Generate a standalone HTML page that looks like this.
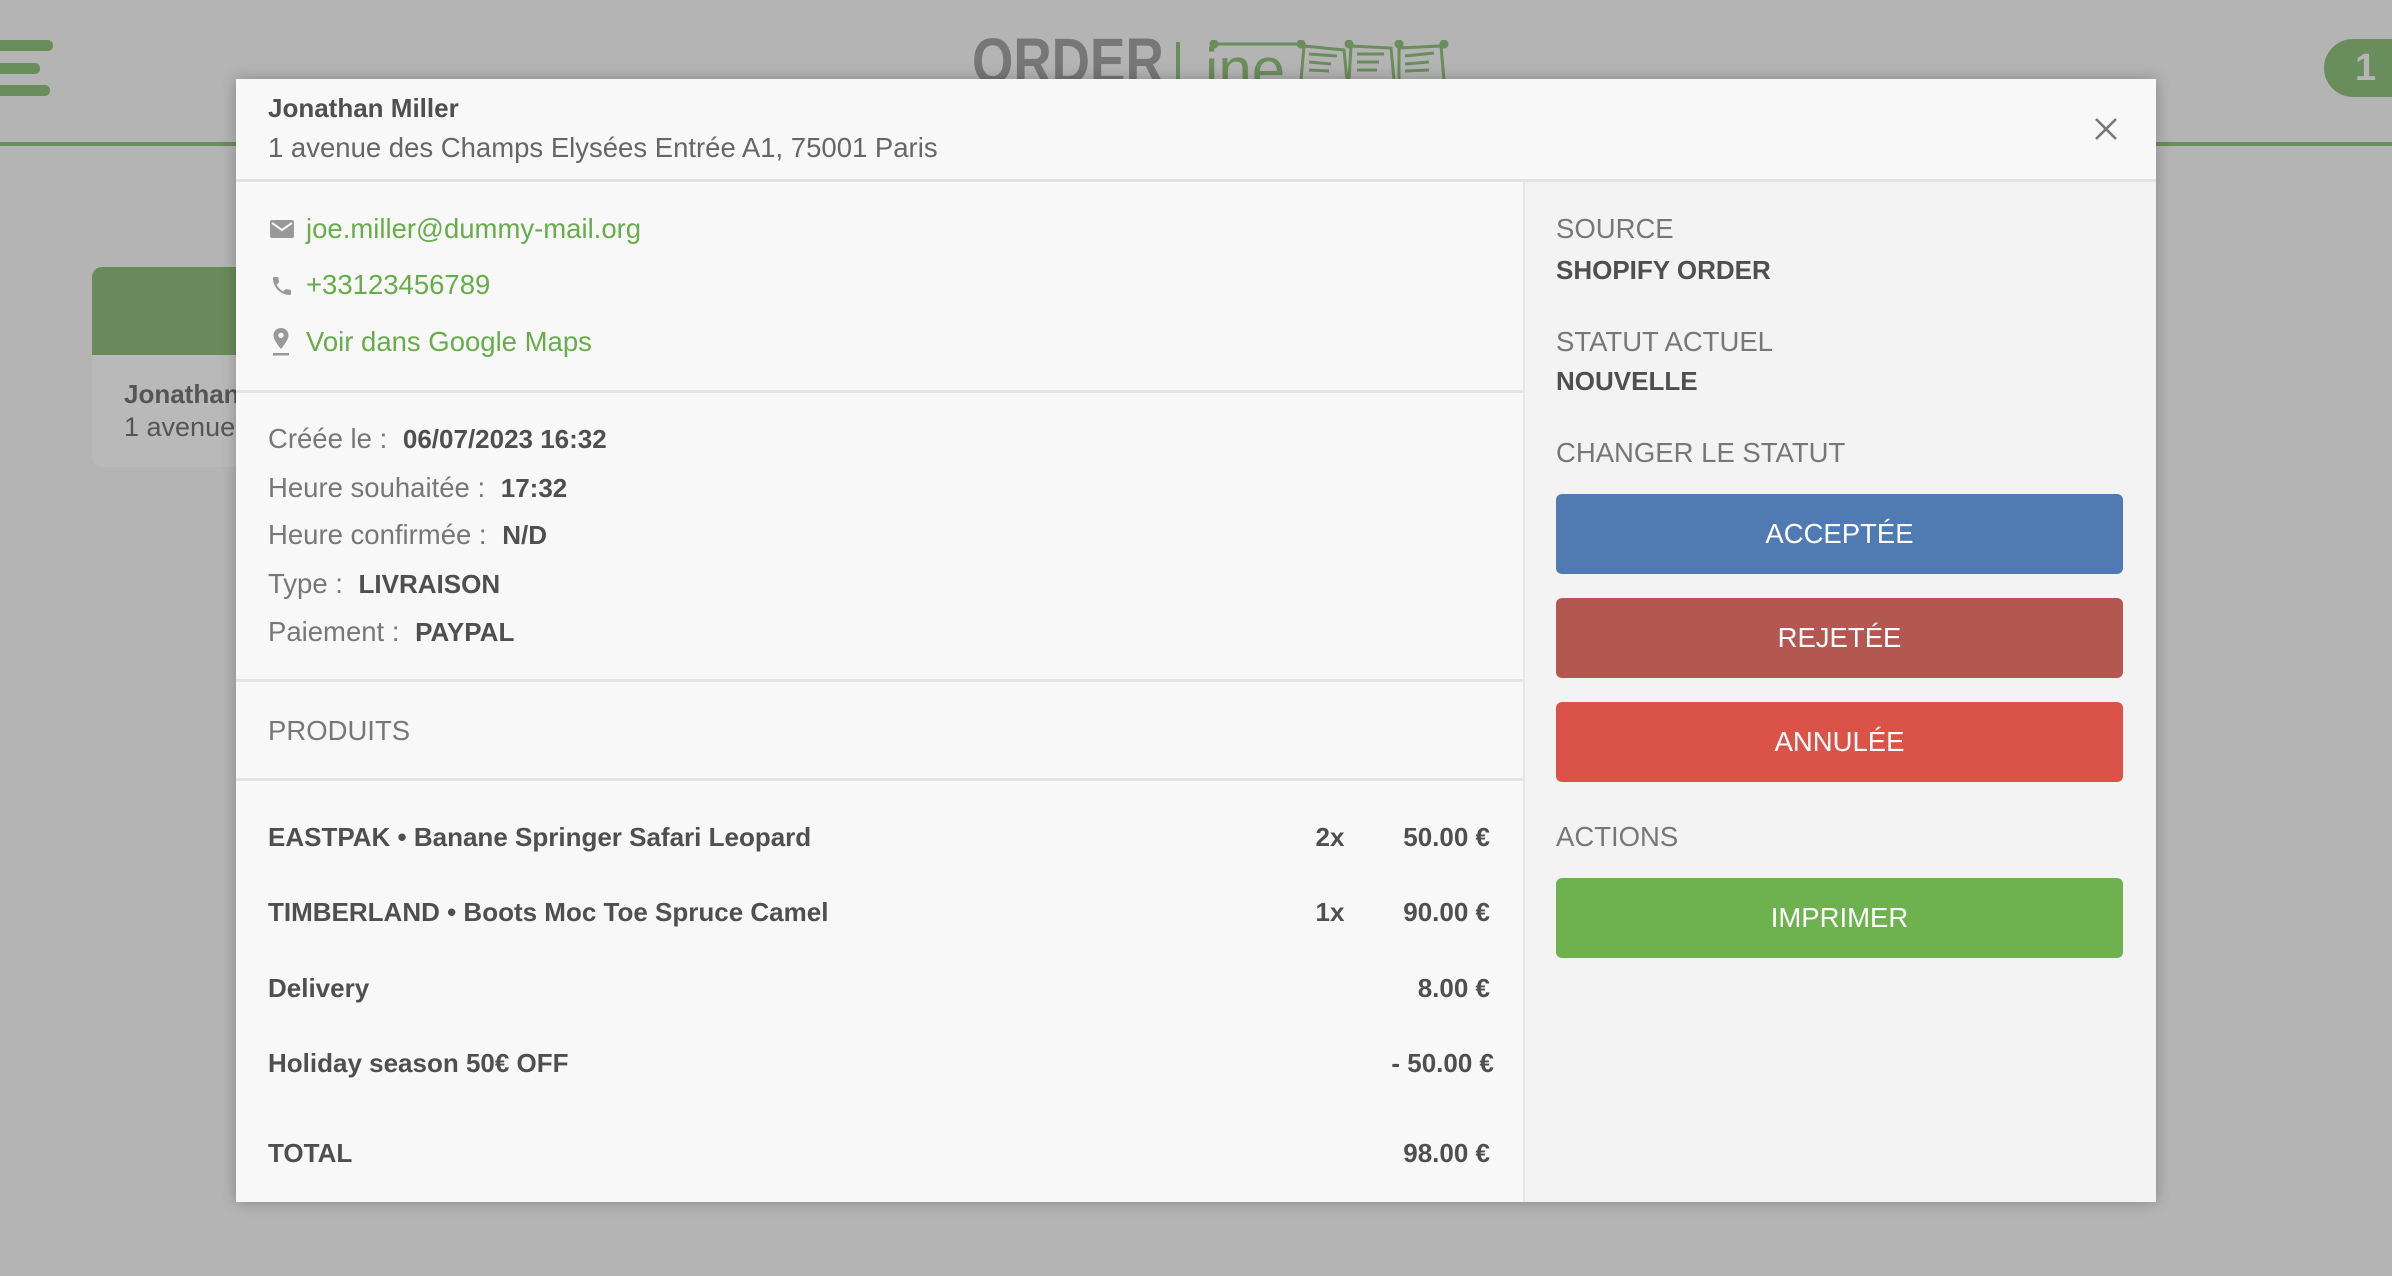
<!DOCTYPE html>
<html><head><meta charset="utf-8">
<style>
*{margin:0;padding:0;box-sizing:border-box}
html,body{width:2392px;height:1276px;overflow:hidden;background:#b4b4b4;font-family:"Liberation Sans",sans-serif;color:#555}
.a{position:absolute;white-space:nowrap}
.t{position:absolute;white-space:nowrap;height:40px;line-height:40px;font-size:27.5px}
.lbl{color:#777}
.b{font-weight:bold;color:#4f4f4f;font-size:26px}
.b2{margin-left:8px}
.g{color:#67ad4a}
.btn{position:absolute;left:1556px;width:567px;height:80px;border-radius:6px;color:#fff;font-size:27.5px;text-align:center;line-height:80px}
.sep{position:absolute;left:236px;width:1287px;height:3px;background:#e4e4e4}
</style></head><body>
<div class="a" style="left:0;top:40px;width:53px;height:11px;background:#6a8d5c;border-radius:0 5px 5px 0"></div>
<div class="a" style="left:0;top:63px;width:40px;height:11px;background:#6a8d5c;border-radius:0 5px 5px 0"></div>
<div class="a" style="left:0;top:85px;width:50px;height:11px;background:#6a8d5c;border-radius:0 5px 5px 0"></div>
<div class="a" style="left:0;top:142px;width:2392px;height:4px;background:#6a8d5c"></div>
<div class="a" style="left:2324px;top:39px;width:100px;height:58px;background:#6a8d5c;border-radius:29px"></div>
<div class="a" style="left:2355px;top:42px;font-size:38px;font-weight:bold;color:#b5b5b5;line-height:52px">1</div>
<div class="a" style="left:972px;top:29px;font-size:64px;font-weight:bold;color:#777;line-height:64px;transform:scaleX(0.83);transform-origin:left top">ORDER</div>
<div class="a" style="left:1176px;top:42px;width:4px;height:40px;background:#6a8d5c"></div>
<div class="a" style="left:1205px;top:30px;font-size:60px;color:#6a8d5c;line-height:80px">ine</div>
<svg class="a" style="left:1209px;top:40px" width="240" height="40" viewBox="0 0 240 40" fill="none" stroke="#6a8d5c" stroke-width="3">
<line x1="5" y1="4" x2="90" y2="4"/><circle cx="5" cy="4" r="3" fill="#6a8d5c"/>
<circle cx="92" cy="4" r="3" fill="#6a8d5c"/><circle cx="140" cy="4" r="3" fill="#6a8d5c"/><circle cx="190" cy="4" r="3" fill="#6a8d5c"/><circle cx="235" cy="4" r="3" fill="#6a8d5c"/>
<path d="M95 6 L92 40 M95 6 L135 10 L138 40 M100 14 L128 16 M100 22 L122 24 M100 30 L120 31"/>
<path d="M142 6 L140 40 M142 6 L182 8 L185 40 M148 14 L175 14 M148 22 L170 22 M148 30 L168 30"/>
<path d="M190 8 L190 40 M190 8 L232 6 L235 40 M196 16 L225 13 M196 24 L220 22 M196 31 L220 30"/>
</svg>
<div class="a" style="left:92px;top:267px;width:160px;height:200px;background:#b9b9b9;border-radius:10px;overflow:hidden">
<div style="height:88px;background:#698b5b"></div>
<div class="a" style="left:32px;top:112px;font-size:26px;font-weight:bold;color:#555">Jonathan Miller</div>
<div class="a" style="left:32px;top:145px;font-size:27px;color:#555">1 avenue des</div>
</div>
<div class="a" style="left:236px;top:79px;width:1920px;height:1123px;background:#f8f8f8;box-shadow:0 0 14px rgba(0,0,0,.25)"></div>
<div class="a" style="left:1523px;top:182px;width:633px;height:1020px;background:#f3f3f3;border-left:2px solid #e6e6e6"></div>
<div class="a" style="left:236px;top:179px;width:1920px;height:3px;background:#e2e2e2"></div>
<div class="t b" style="left:268px;top:88px">Jonathan Miller</div>
<div class="t" style="left:268px;top:128px;color:#666">1 avenue des Champs Elysées Entrée A1, 75001 Paris</div>
<svg class="a" style="left:2094px;top:117px" width="24" height="24" viewBox="0 0 24 24" stroke="#777" stroke-width="2.6"><path d="M2 2L22 22M22 2L2 22"/></svg>

<svg class="a" style="left:270px;top:220px" width="24" height="18" viewBox="0 0 24 18"><rect width="24" height="18" rx="2" fill="#999"/><path d="M2 3L12 10L22 3" stroke="#f8f8f8" stroke-width="2" fill="none"/></svg>
<div class="t g" style="left:306px;top:209px">joe.miller@dummy-mail.org</div>
<svg class="a" style="left:270px;top:274px" width="24" height="24" viewBox="0 0 24 24"><path fill="#999" d="M6.6 10.8c1.4 2.8 3.8 5.1 6.6 6.6l2.2-2.2c.3-.3.7-.4 1-.2 1.1.4 2.3.6 3.6.6.6 0 1 .4 1 1V20c0 .6-.4 1-1 1C10.6 21 3 13.4 3 4c0-.6.4-1 1-1h3.5c.6 0 1 .4 1 1 0 1.3.2 2.5.6 3.6.1.3 0 .7-.2 1z"/></svg>
<div class="t g" style="left:306px;top:265px">+33123456789</div>
<svg class="a" style="left:272px;top:328px" width="18" height="28" viewBox="0 0 18 28"><path fill="#999" d="M9 0C4.6 0 1.5 3.2 1.5 7.3 1.5 12.5 9 21 9 21s7.5-8.5 7.5-13.7C16.5 3.2 13.4 0 9 0zm0 10a2.7 2.7 0 110-5.4A2.7 2.7 0 019 10z"/><rect x="1" y="25" width="16" height="2.5" fill="#999"/></svg>
<div class="t g" style="left:306px;top:322px">Voir dans Google Maps</div>
<div class="sep" style="top:390px"></div>

<div class="t" style="left:268px;top:419px"><span class="lbl">Créée le :</span> <span class="b b2">06/07/2023 16:32</span></div>
<div class="t" style="left:268px;top:468px"><span class="lbl">Heure souhaitée :</span> <span class="b b2">17:32</span></div>
<div class="t" style="left:268px;top:515px"><span class="lbl">Heure confirmée :</span> <span class="b b2">N/D</span></div>
<div class="t" style="left:268px;top:564px"><span class="lbl">Type :</span> <span class="b b2">LIVRAISON</span></div>
<div class="t" style="left:268px;top:612px"><span class="lbl">Paiement :</span> <span class="b b2">PAYPAL</span></div>
<div class="sep" style="top:679px"></div>
<div class="t lbl" style="left:268px;top:711px">PRODUITS</div>
<div class="sep" style="top:778px"></div>

<div class="t b" style="left:268px;top:817px">EASTPAK • Banane Springer Safari Leopard</div>
<div class="t b" style="left:1300px;top:817px;width:60px;text-align:center">2x</div>
<div class="t b" style="left:1340px;top:817px;width:150px;text-align:right">50.00 €</div>
<div class="t b" style="left:268px;top:892px">TIMBERLAND • Boots Moc Toe Spruce Camel</div>
<div class="t b" style="left:1300px;top:892px;width:60px;text-align:center">1x</div>
<div class="t b" style="left:1340px;top:892px;width:150px;text-align:right">90.00 €</div>
<div class="t b" style="left:268px;top:968px">Delivery</div>
<div class="t b" style="left:1340px;top:968px;width:150px;text-align:right">8.00 €</div>
<div class="t b" style="left:268px;top:1043px">Holiday season 50€ OFF</div>
<div class="t b" style="left:1300px;top:1043px;width:194px;text-align:right">- 50.00 €</div>
<div class="t b" style="left:268px;top:1133px">TOTAL</div>
<div class="t b" style="left:1340px;top:1133px;width:150px;text-align:right">98.00 €</div>

<div class="t lbl" style="left:1556px;top:209px">SOURCE</div>
<div class="t b" style="left:1556px;top:250px">SHOPIFY ORDER</div>
<div class="t lbl" style="left:1556px;top:322px">STATUT ACTUEL</div>
<div class="t b" style="left:1556px;top:361px">NOUVELLE</div>
<div class="t lbl" style="left:1556px;top:433px">CHANGER LE STATUT</div>
<div class="btn" style="top:494px;background:#4f7ab2">ACCEPTÉE</div>
<div class="btn" style="top:598px;background:#b35750">REJETÉE</div>
<div class="btn" style="top:702px;background:#db5249">ANNULÉE</div>
<div class="t lbl" style="left:1556px;top:817px">ACTIONS</div>
<div class="btn" style="top:878px;background:#6db24f">IMPRIMER</div>
</body></html>
